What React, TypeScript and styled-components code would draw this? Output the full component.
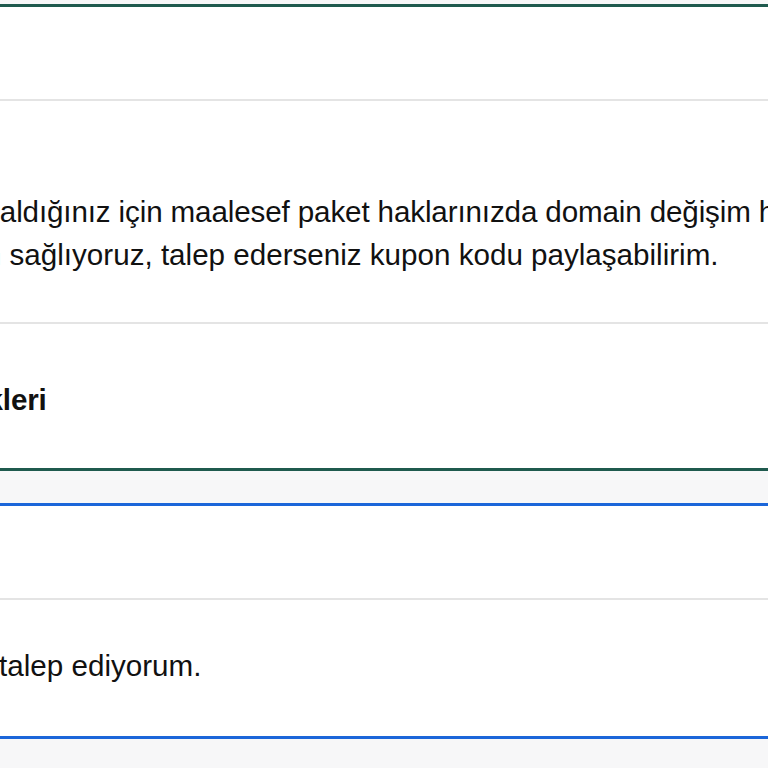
import React from "react";
import styled, { createGlobalStyle } from "styled-components";

const GlobalStyle = createGlobalStyle`
  html, body {
    margin: 0;
    padding: 0;
    overflow: hidden;
    background: #f7f7f8;
  }
  body {
    font-family: "Liberation Sans", Arial, sans-serif;
    color: #111111;
  }
`;

const Page = styled.main`
  width: 1400px;
  margin-left: -319px;
  padding-top: 4px;
  display: flex;
  flex-direction: column;
  gap: 32px;
`;

const Card = styled.section<{ $accent: string }>`
  background: #ffffff;
  border: 3px solid ${(p) => p.$accent};
  display: flex;
  flex-direction: column;
`;

const CardHeader = styled.header`
  height: 92px;
  padding: 0 24px;
  border-bottom: 2px solid #e4e4e4;
`;

const CardBody = styled.div<{ $top: number; $bottom: number }>`
  padding: ${(p) => p.$top}px 24px ${(p) => p.$bottom}px;
`;

const Message = styled.div`
  font-size: 29.6px;
  line-height: 43px;
  white-space: nowrap;
`;

const Line = styled.p<{ $tracking?: number }>`
  margin: 0;
  letter-spacing: ${(p) => p.$tracking ?? 0}px;
`;

const CardFooter = styled.footer`
  border-top: 2px solid #e4e4e4;
  padding: 54px 24px 47px;
`;

const FooterTitle = styled.h3`
  margin: 0;
  font-size: 29.6px;
  font-weight: 700;
  line-height: 43px;
  letter-spacing: -0.15px;
  white-space: nowrap;
`;

export default function App() {
  return (
    <>
      <GlobalStyle />
      <Page>
        <Card $accent="#1f5a4e">
          <CardHeader />
          <CardBody $top={89} $bottom={46}>
            <Message>
              <Line $tracking={-0.13}>
                Domaini promosyonla aldığınız için maalesef paket haklarınızda domain değişim hakkı bulunmamaktadır.
              </Line>
              <Line>
                Yeni tescillerde indirim sağlıyoruz, talep ederseniz kupon kodu paylaşabilirim.
              </Line>
            </Message>
          </CardBody>
          <CardFooter>
            <FooterTitle>Gönderilen Dosya Ekleri</FooterTitle>
          </CardFooter>
        </Card>
        <Card $accent="#1b66d9">
          <CardHeader />
          <CardBody $top={44} $bottom={49}>
            <Message>
              <Line>Domain için değişiklik talep ediyorum.</Line>
            </Message>
          </CardBody>
        </Card>
      </Page>
    </>
  );
}
